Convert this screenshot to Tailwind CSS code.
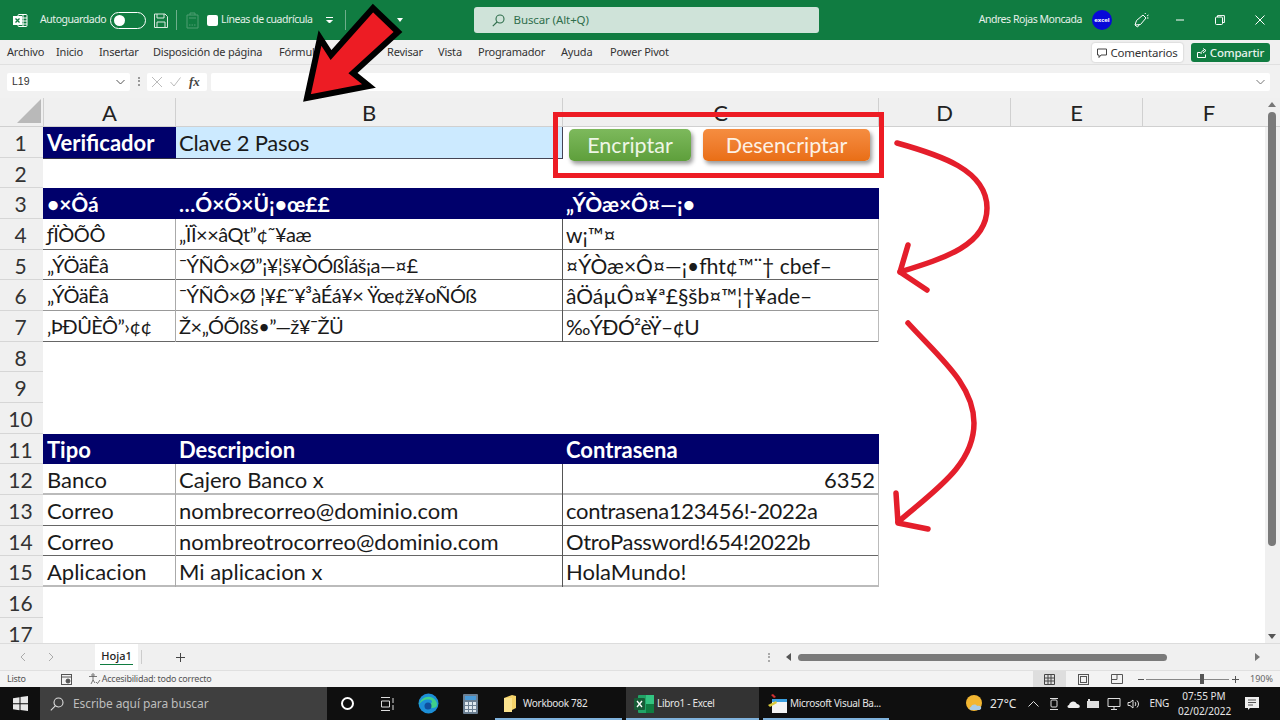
<!DOCTYPE html>
<html lang="es">
<head>
<meta charset="UTF-8">
<script src="https://cdn.jsdelivr.net/npm/@tailwindcss/browser@4"></script>
<title>Libro1 - Excel</title>
</head>
<body class="font-['Noto_Sans',sans-serif]">
<div class="relative w-[1280px] h-[720px] overflow-hidden flex flex-col bg-white">

  <!-- Title bar -->
  <div class="h-[40px] shrink-0 bg-[#107c41] flex items-center text-[10.500px] tracking-[-0.45px] text-[#e6f0ea]">
    <svg class="ml-[13px] w-[15px] h-[15px]" viewBox="0 0 15 15" fill="none" stroke="#fff"><rect x="5" y="1.500" width="9" height="12" rx="1"/><path d="M10 2v11M5 5h9M5 8h9M5 11h9"/><rect x="0.500" y="3.500" width="8" height="8" fill="#fff"/><path d="M2.500 5.500l4 4M6.500 5.500l-4 4" stroke="#107c41" stroke-width="1.300"/></svg>
    <span class="ml-[12px]">Autoguardado</span>
    <div class="ml-[4px] w-[36px] h-[17px] rounded-full border border-white flex items-center px-[3px]"><div class="w-[11px] h-[11px] rounded-full bg-white"></div></div>
    <svg class="ml-[8px] w-[14px] h-[15px]" viewBox="0 0 14 15" fill="none" stroke="#dbe9e1"><path d="M.5 1h10.500l2.500 2.500v11H.5z"/><path d="M3 1v4h7V1M3 14.500V9h8v5.500"/></svg>
    <div class="ml-[8px] w-px h-[20px] bg-[#6fae8c]"></div>
    <svg class="ml-[9px] w-[13px] h-[17px]" viewBox="0 0 13 17" fill="none" stroke="#4f9d73"><path d="M1 3h11v13H1z"/><path d="M4 3V1h5v2M3 6h7"/><path d="M3 13h7" stroke-dasharray="1.500 1"/></svg>
    <div class="ml-[8px] w-[11px] h-[11px] rounded-[2px] bg-white"></div>
    <span class="ml-[3px] text-[#e3efe8]">Líneas de cuadrícula</span>
    <svg class="ml-[12px] w-[9px] h-[8px]" viewBox="0 0 9 8" fill="none" stroke="#fff"><path d="M1 1.500h7"/><path d="M1.500 4l3 3 3-3" fill="#fff"/></svg>
    <div class="ml-[11px] w-px h-[20px] bg-[#6fae8c]"></div>
    <div class="ml-[51px] w-0 h-0 border-x-[3px] border-x-transparent border-t-[4px] border-t-white"></div>
    <div class="ml-[71px] w-[345px] h-[26px] rounded-[3px] bg-[#cfe3d9] flex items-center text-[#2f6e4c]">
      <svg class="ml-[18px] w-[13px] h-[13px]" viewBox="0 0 13 13" fill="none" stroke="#2f6e4c" stroke-width="1.100"><circle cx="8" cy="5" r="4"/><path d="M5 8L.8 12.200"/></svg>
      <span class="ml-[9px] text-[11.500px] tracking-[-0.1px]">Buscar (Alt+Q)</span>
    </div>
    <span class="ml-auto">Andres Rojas Moncada</span>
    <div class="ml-[10px] w-[20px] h-[20px] rounded-full bg-[#0808d8] flex items-center justify-center text-[6px] text-white font-bold leading-none tracking-normal">excel</div>
    <svg class="ml-[22px] w-[15px] h-[15px]" viewBox="0 0 15 15" fill="none" stroke="#fff"><path d="M1 12l1.500-4.500L9 2l3 3-5.500 6.500z"/><path d="M1 12l2.500 2 2-2.500M11 1l.5-1M13 3l1.500-1M13 5h1.500"/></svg>
    <svg class="ml-[26px] w-[10px] h-[10px]" viewBox="0 0 10 10" stroke="#fff"><path d="M1 5h8"/></svg>
    <svg class="ml-[30px] w-[10px] h-[10px]" viewBox="0 0 10 10" fill="none" stroke="#fff"><rect x=".5" y="2" width="7" height="7.500" rx="1"/><path d="M2.500 2V.6h6.900V7.500H8"/></svg>
    <svg class="ml-[30px] mr-[15px] w-[10px] h-[10px]" viewBox="0 0 10 10" stroke="#fff"><path d="M.5.500l9 9M9.500.500l-9 9"/></svg>
  </div>

  <!-- Ribbon tabs -->
  <div class="h-[25px] shrink-0 bg-[#f0f0f0] flex items-center pt-px text-[11px] tracking-[-0.2px] text-[#333] border-b border-[#e0e0e0]">
    <span class="ml-[7px] w-[49px]">Archivo</span>
    <span class="w-[43px]">Inicio</span>
    <span class="w-[54px]">Insertar</span>
    <span class="w-[126px]">Disposición de página</span>
    <span class="w-[56px]">Fórmulas</span>
    <span class="w-[52px]">Datos</span>
    <span class="w-[51px]">Revisar</span>
    <span class="w-[40px]">Vista</span>
    <span class="w-[83px]">Programador</span>
    <span class="w-[49px]">Ayuda</span>
    <span>Power Pivot</span>
    <div class="ml-auto w-[91px] h-[19px] rounded-[3px] bg-white shadow-[0_0_2px_rgba(0,0,0,.25)] flex items-center justify-center gap-[3px] text-[11.500px] text-[#333]">
      <svg class="w-[10px] h-[10px]" viewBox="0 0 10 10" fill="none" stroke="#444"><path d="M.5 1h9v6H4L2 9.500V7H.5z"/></svg>Comentarios
    </div>
    <div class="ml-[8px] mr-[10px] w-[79px] h-[19px] rounded-[3px] bg-[#107c41] flex items-center justify-center gap-[3px] text-[11.500px] font-medium text-[#e6f3ec]">
      <svg class="w-[10px] h-[10px]" viewBox="0 0 10 10" fill="none" stroke="#fff"><path d="M.5 4.500h3M.5 4.500v5h8v-3M4 6c0-2.500 1.500-3.500 3-3.500M6 .5l3 2-3 2.500"/></svg>Compartir
    </div>
  </div>

  <!-- Formula bar -->
  <div class="h-[33px] shrink-0 bg-[#f1f1f1] flex items-center text-[11px] text-[#333]">
    <div class="ml-[7px] w-[123px] h-[18px] bg-white rounded-[2px] flex items-center justify-between px-[5px]">
      <span class="font-['Liberation_Sans',sans-serif] text-[10.500px]">L19</span>
      <svg class="w-[9px] h-[6px]" viewBox="0 0 9 6" fill="none" stroke="#555"><path d="M.5 1l4 4 4-4"/></svg>
    </div>
    <div class="ml-[8px] w-[2px] h-[9px] border-l-2 border-dotted border-[#999]"></div>
    <div class="ml-[7px] w-[60px] h-[18px] bg-white rounded-[2px] flex items-center">
      <svg class="ml-[5px] w-[10px] h-[10px]" viewBox="0 0 10 10" stroke="#bbb"><path d="M0 0l10 10M10 0L0 10"/></svg>
      <svg class="ml-[8px] w-[11px] h-[10px]" viewBox="0 0 11 10" fill="none" stroke="#bbb"><path d="M.5 5l3.500 4L10.500.5"/></svg>
      <span class="ml-[8px] font-['Liberation_Serif',serif] italic font-bold text-[13px] text-[#444]">fx</span>
    </div>
    <div class="ml-[4px] flex-1 mr-[10px] h-[18px] bg-white rounded-[2px] flex items-center justify-end pr-[5px]">
      <svg class="w-[9px] h-[6px]" viewBox="0 0 9 6" fill="none" stroke="#777"><path d="M.5 1l4 4 4-4"/></svg>
    </div>
  </div>

  <!-- Column headers -->
  <div class="h-[29px] shrink-0 bg-[#f0f0f0] flex font-['Lato',sans-serif] text-[22px] text-[#222] border-b border-[#d0d0d0] overflow-hidden">
    <div class="w-[43px] shrink-0 flex items-end justify-end pr-[2px] pb-[3px]">
      <div class="w-0 h-0 border-l-[24px] border-l-transparent border-b-[24px] border-b-[#b9b9b9]"></div>
    </div>
    <div class="w-[133px] shrink-0 flex items-center justify-center border-x border-[#d0d0d0]">A</div>
    <div class="w-[387px] shrink-0 flex items-center justify-center border-r border-[#d0d0d0]">B</div>
    <div class="w-[316px] shrink-0 flex items-center justify-center border-r border-[#d0d0d0]">C</div>
    <div class="w-[132px] shrink-0 flex items-center justify-center border-r border-[#d0d0d0]">D</div>
    <div class="w-[132px] shrink-0 flex items-center justify-center border-r border-[#d0d0d0]">E</div>
    <div class="w-[132px] shrink-0 flex items-center justify-center">F</div>
  </div>

  <!-- Sheet -->
  <div class="h-[516px] shrink-0 flex overflow-hidden font-['Lato',sans-serif] text-[22px] text-[#1a1a1a]">
    <div class="w-[43px] shrink-0 bg-[#f0f0f0] text-[#333] text-[21px] flex flex-col text-center">
      <div class="h-[30.670px] shrink-0 border-b border-[#d6d6d6] pr-[2px] leading-[31px]">1</div>
      <div class="h-[30.670px] shrink-0 border-b border-[#d6d6d6] pr-[2px] leading-[31px]">2</div>
      <div class="h-[30.670px] shrink-0 border-b border-[#d6d6d6] pr-[2px] leading-[31px]">3</div>
      <div class="h-[30.670px] shrink-0 border-b border-[#d6d6d6] pr-[2px] leading-[31px]">4</div>
      <div class="h-[30.670px] shrink-0 border-b border-[#d6d6d6] pr-[2px] leading-[31px]">5</div>
      <div class="h-[30.670px] shrink-0 border-b border-[#d6d6d6] pr-[2px] leading-[31px]">6</div>
      <div class="h-[30.670px] shrink-0 border-b border-[#d6d6d6] pr-[2px] leading-[31px]">7</div>
      <div class="h-[30.670px] shrink-0 border-b border-[#d6d6d6] pr-[2px] leading-[31px]">8</div>
      <div class="h-[30.670px] shrink-0 border-b border-[#d6d6d6] pr-[2px] leading-[31px]">9</div>
      <div class="h-[30.670px] shrink-0 border-b border-[#d6d6d6] pr-[2px] leading-[31px]">10</div>
      <div class="h-[30.670px] shrink-0 border-b border-[#d6d6d6] pr-[2px] leading-[31px]">11</div>
      <div class="h-[30.670px] shrink-0 border-b border-[#d6d6d6] pr-[2px] leading-[31px]">12</div>
      <div class="h-[30.670px] shrink-0 border-b border-[#d6d6d6] pr-[2px] leading-[31px]">13</div>
      <div class="h-[30.670px] shrink-0 border-b border-[#d6d6d6] pr-[2px] leading-[31px]">14</div>
      <div class="h-[30.670px] shrink-0 border-b border-[#d6d6d6] pr-[2px] leading-[31px]">15</div>
      <div class="h-[30.670px] shrink-0 border-b border-[#d6d6d6] pr-[2px] leading-[31px]">16</div>
      <div class="h-[30.670px] shrink-0 pr-[2px] leading-[31px]">17</div>
    </div>

    <div class="flex-1 flex flex-col bg-white">
      <!-- row 1 -->
      <div class="h-[30.670px] shrink-0 grid grid-cols-[133px_387px] w-[520px] leading-[31px]">
        <div class="bg-[#00006b] text-white font-bold pl-[4px] border-b border-[#334]">Verificador</div>
        <div class="bg-[#cceaff] pl-[3px] tracking-[-0.2px] border-r border-b border-[#445]">Clave 2 Pasos</div>
      </div>
      <div class="h-[30.670px] shrink-0"></div>
      <!-- encrypted table -->
      <div class="h-[30.670px] shrink-0 grid grid-cols-[133px_387px_316px] w-[836px] leading-[31px] bg-[#00006b] text-white text-[21px] font-bold">
        <div class="pl-[4px]">•×Ôá</div><div class="pl-[3px]">…Ó×Õ×Ü¡•œ££</div><div class="pl-[3px]">„ÝÒæ×Ô¤—¡•</div>
      </div>
      <div class="h-[30.670px] shrink-0 grid grid-cols-[133px_387px_316px] w-[836px] leading-[31px] text-[20px] border-b border-[#666]">
        <div class="pl-[4px] tracking-[-0.5px] border-r border-[#aaa]">ƒÏÒÕÔ</div><div class="pl-[3px] tracking-[-0.5px] border-r border-[#555]">„ÏÎ××âQt”¢˜¥aæ</div><div class="pl-[3px] text-[21px] border-r border-[#bbb]">w¡™¤</div>
      </div>
      <div class="h-[30.670px] shrink-0 grid grid-cols-[133px_387px_316px] w-[836px] leading-[31px] text-[20px] border-b border-[#666]">
        <div class="pl-[4px] tracking-[-0.5px] border-r border-[#aaa]">„ÝÖäÊâ</div><div class="pl-[3px] tracking-[-0.5px] border-r border-[#555]">¯ÝÑÔ×Ø”¡¥¦š¥ÒÓßÎáš¡a—¤£</div><div class="pl-[3px] text-[21px] border-r border-[#bbb]">¤ÝÒæ×Ô¤—¡•fht¢™¨† cbef–</div>
      </div>
      <div class="h-[30.670px] shrink-0 grid grid-cols-[133px_387px_316px] w-[836px] leading-[31px] text-[20px] border-b border-[#999]">
        <div class="pl-[4px] tracking-[-0.5px] border-r border-[#aaa]">„ÝÖäÊâ</div><div class="pl-[3px] tracking-[-0.5px] border-r border-[#555]">¯ÝÑÔ×Ø ¦¥£˜¥³àÉá¥× Ÿœ¢ž¥oÑÓß</div><div class="pl-[3px] text-[21px] border-r border-[#bbb]">âÖáµÔ¤¥ª£§šb¤™¦†¥ade–</div>
      </div>
      <div class="h-[30.670px] shrink-0 grid grid-cols-[133px_387px_316px] w-[836px] leading-[31px] text-[20px] border-b border-[#666]">
        <div class="pl-[4px] tracking-[-0.5px] border-r border-[#aaa]">‚ÞÐÛÈÔ”›¢¢</div><div class="pl-[3px] tracking-[-0.5px] border-r border-[#555]">Ž×„ÓÕßš•”—ž¥¯ŽÜ</div><div class="pl-[3px] text-[21px] tracking-[-0.6px] border-r border-[#bbb]">‰ÝÐÓ²èŸ–¢U</div>
      </div>
      <div class="h-[30.670px] shrink-0"></div>
      <div class="h-[30.670px] shrink-0"></div>
      <div class="h-[30.670px] shrink-0"></div>
      <!-- password table -->
      <div class="h-[30.670px] shrink-0 grid grid-cols-[133px_387px_316px] w-[836px] leading-[31px] bg-[#00006b] text-white font-bold">
        <div class="pl-[4px]">Tipo</div><div class="pl-[3px]">Descripcion</div><div class="pl-[3px]">Contrasena</div>
      </div>
      <div class="h-[30.670px] shrink-0 grid grid-cols-[133px_387px_316px] w-[836px] leading-[31px] border-b-2 border-[#bbb]">
        <div class="pl-[4px] border-r border-[#aaa]">Banco</div><div class="pl-[3px] border-r border-[#555]">Cajero Banco x</div><div class="pr-[3px] text-right border-r border-[#bbb]">6352</div>
      </div>
      <div class="h-[30.670px] shrink-0 grid grid-cols-[133px_387px_316px] w-[836px] leading-[31px] border-b border-[#666]">
        <div class="pl-[4px] border-r border-[#aaa]">Correo</div><div class="pl-[3px] border-r border-[#555]">nombrecorreo@dominio.com</div><div class="pl-[3px] tracking-[-0.3px] border-r border-[#bbb]">contrasena123456!-2022a</div>
      </div>
      <div class="h-[30.670px] shrink-0 grid grid-cols-[133px_387px_316px] w-[836px] leading-[31px] border-b border-[#666]">
        <div class="pl-[4px] border-r border-[#aaa]">Correo</div><div class="pl-[3px] border-r border-[#555]">nombreotrocorreo@dominio.com</div><div class="pl-[3px] tracking-[-0.3px] border-r border-[#bbb]">OtroPassword!654!2022b</div>
      </div>
      <div class="h-[30.670px] shrink-0 grid grid-cols-[133px_387px_316px] w-[836px] leading-[31px] border-b-2 border-[#bbb]">
        <div class="pl-[4px] border-r border-[#aaa]">Aplicacion</div><div class="pl-[3px] border-r border-[#555]">Mi aplicacion x</div><div class="pl-[3px] border-r border-[#bbb]">HolaMundo!</div>
      </div>
    </div>

    <!-- Vertical scrollbar -->
    <div class="w-[15px] shrink-0 bg-[#f0f0f0] flex flex-col items-center"></div>
  </div>

  <!-- Sheet tabs -->
  <div class="h-[27px] shrink-0 bg-[#f0f0f0] border-t border-[#dcdcdc] flex items-center text-[11px] text-[#222]">
    <svg class="ml-[20px] w-[6px] h-[10px]" viewBox="0 0 6 10" fill="none" stroke="#aaa"><path d="M5 1L1 5l4 4"/></svg>
    <svg class="ml-[22px] w-[6px] h-[10px]" viewBox="0 0 6 10" fill="none" stroke="#aaa"><path d="M1 1l4 4-4 4"/></svg>
    <div class="ml-[41px] w-[43px] h-[26px] bg-white flex flex-col items-center justify-center font-medium leading-[14px]"><span class="border-b-[1.500px] border-[#107c41] px-[1px] pb-[1px]">Hoja1</span></div>
    <div class="ml-[3px] w-px h-[14px] bg-[#ccc]"></div>
    <svg class="ml-[33px] w-[11px] h-[11px]" viewBox="0 0 11 11" stroke="#444"><path d="M5.500 1v9M1 5.500h9"/></svg>
    <div class="ml-[582px] w-[2px] h-[9px] border-l-2 border-dotted border-[#aaa]"></div>
    <div class="ml-[16px] w-0 h-0 border-y-[4px] border-y-transparent border-r-[5px] border-r-[#555]"></div>
    <div class="ml-[7px] w-[369px] h-[7px] rounded-full bg-[#7a7a7a]"></div>
    <div class="ml-[88px] w-0 h-0 border-y-[4px] border-y-transparent border-l-[5px] border-l-[#777]"></div>
  </div>

  <!-- Status bar -->
  <div class="h-[17px] shrink-0 bg-[#f3f3f3] border-t border-[#e0e0e0] flex items-center text-[9px] tracking-[-0.25px] text-[#555]">
    <span class="ml-[7px]">Listo</span>
    <svg class="ml-[35px] w-[11px] h-[11px]" viewBox="0 0 11 11" fill="none" stroke="#555"><rect x=".5" y=".5" width="10" height="10"/><path d="M.5 3h10"/><circle cx="7" cy="7" r="2" fill="#555"/></svg>
    <svg class="ml-[16px] w-[13px] h-[12px]" viewBox="0 0 13 12" fill="none" stroke="#555" stroke-width=".8"><circle cx="5" cy="2" r="1.200"/><path d="M1 3.500h8M5 4v3L3 11M5 7l2 3M8 9l1.500 1.500L12 7"/></svg>
    <span class="ml-[1px]">Accesibilidad: todo correcto</span>
    <div class="ml-auto w-[33px] h-[17px] bg-[#dedede] flex items-center justify-center">
      <svg class="w-[11px] h-[11px]" viewBox="0 0 11 11" fill="none" stroke="#444"><path d="M.5.500h10v10H.5zM4 .5v10M7 .5v10M.5 4h10M.5 7h10"/></svg>
    </div>
    <svg class="ml-[12px] w-[11px] h-[11px]" viewBox="0 0 11 11" fill="none" stroke="#555"><rect x=".5" y=".5" width="10" height="10"/><rect x="2.500" y="2.500" width="6" height="6"/></svg>
    <svg class="ml-[22px] w-[12px] h-[10px]" viewBox="0 0 12 10" fill="none" stroke="#555"><path d="M.5.500h11v9H.5zM6 .5v5H.5"/></svg>
    <div class="ml-[15px] w-[6px] h-px bg-[#555]"></div>
    <div class="ml-[2px] w-[83px] h-px bg-[#888] relative"><div class="absolute left-[54px] top-[-5px] w-[4px] h-[10px] bg-[#555]"></div></div>
    <svg class="ml-[3px] w-[7px] h-[7px]" viewBox="0 0 7 7" stroke="#555"><path d="M3.500 0v7M0 3.500h7"/></svg>
    <span class="ml-[11px] mr-[7px] tracking-normal text-[#666]">190%</span>
  </div>

  <!-- Taskbar -->
  <div class="h-[33px] shrink-0 bg-[#0f0f0f] flex items-center text-[10px] tracking-[-0.3px] text-[#e6e6e6]">
    <div class="w-[40px] flex justify-center">
      <svg class="w-[15px] h-[15px]" viewBox="0 0 15 15" fill="#e8e8e8"><path d="M0 2.200l6.500-1v6H0zM7.500 1l7.500-1v7.200H7.500zM0 8.200h6.500v6L0 13.300zM7.500 8.200H15V15l-7.500-1z"/></svg>
    </div>
    <div class="w-[287px] h-full bg-[#3f3f3f] flex items-center">
      <svg class="ml-[10px] w-[14px] h-[14px]" viewBox="0 0 14 14" fill="none" stroke="#ddd" stroke-width="1.100"><circle cx="8.500" cy="5.500" r="4.500"/><path d="M5.300 8.800L.8 13.300"/></svg>
      <span class="ml-[9px] text-[12px] tracking-[-0.1px] text-[#bdbdbd]">Escribe aquí para buscar</span>
    </div>
    <div class="w-[40px] flex justify-center"><div class="w-[13px] h-[13px] rounded-full border-2 border-white"></div></div>
    <div class="w-[40px] flex justify-center">
      <svg class="w-[14px] h-[14px]" viewBox="0 0 14 14" fill="none" stroke="#ddd"><path d="M1 .5h9M1 13.500h9M1.500 4h8v6h-8zM13 1v5M13 8v5"/></svg>
    </div>
    <div class="w-[42px] flex justify-center">
      <svg class="w-[21px] h-[21px]" viewBox="0 0 21 21"><circle cx="10.500" cy="10.500" r="10" fill="#1c8fd8"/><path d="M1 12C2 5 10 2 15 5c4 2.500 5 7 3 9-3 2-7 1-7-1 0-2 3-2 3-5-3-3-11-1-13 4z" fill="#3fd08a"/><circle cx="10" cy="13" r="3.500" fill="#0f4f9e"/></svg>
    </div>
    <div class="ml-[2px] w-[44px] pr-[6px] flex justify-center">
      <svg class="w-[15px] h-[20px]" viewBox="0 0 15 20"><rect width="15" height="20" rx="1" fill="#6b7f92"/><rect x="2" y="2" width="11" height="4" fill="#4a9bd8"/><path d="M2 8h3v3H2zM6 8h3v3H6zM10 8h3v3h-3zM2 12h3v3H2zM6 12h3v3H6zM10 12h3v3h-3zM2 16h3v2H2zM6 16h3v2H6zM10 16h3v2h-3z" fill="#dfe8ef"/></svg>
    </div>
    <div class="relative w-[127px] h-full flex items-center">
      <svg class="ml-[9px] w-[12px] h-[17px]" viewBox="0 0 12 17"><path d="M0 3l8-3 4 1v12l-8 4H0z" fill="#f5d36a"/><path d="M0 3h8v14H0z" fill="#fbe38e"/></svg>
      <span class="ml-[7px]">Workbook 782</span>
      <div class="absolute left-0 right-0 bottom-0 h-[2px] bg-[#7fb2dc]"></div>
    </div>
    <div class="relative ml-[4px] w-[133px] h-full bg-[#333] flex items-center">
      <svg class="ml-[8px] w-[20px] h-[20px]" viewBox="0 0 20 20"><rect x="4" y="1" width="16" height="18" rx="1" fill="#21a366"/><rect x="12" y="1" width="8" height="9" fill="#33c481"/><rect x="12" y="10" width="8" height="9" fill="#107c41"/><rect y="4" width="11" height="12" rx="1" fill="#185c37"/><path d="M3 7l5 6M8 7l-5 6" stroke="#fff" stroke-width="1.300"/></svg>
      <span class="ml-[3px]">Libro1 - Excel</span>
      <div class="absolute left-0 right-0 bottom-0 h-[2px] bg-[#7fb2dc]"></div>
    </div>
    <div class="relative ml-[4px] w-[126px] h-full flex items-center overflow-hidden">
      <svg class="ml-[5px] w-[19px] h-[19px]" viewBox="0 0 19 19"><rect x="4" y="5" width="15" height="14" fill="#f4f4f4"/><rect x="4" y="5" width="15" height="3" fill="#3ba0e0"/><path d="M0 11l8-4 1 2-7 4z" fill="#d9c93a"/><path d="M5 0l3 3-2 1-3-3z" fill="#d03030"/></svg>
      <span class="ml-[3px] whitespace-nowrap">Microsoft Visual Ba...</span>
      <div class="absolute left-0 right-0 bottom-0 h-[2px] bg-[#7fb2dc]"></div>
    </div>
    <svg class="ml-[77px] w-[17px] h-[17px]" viewBox="0 0 17 17"><circle cx="8" cy="8" r="8" fill="#f2b632"/><path d="M5 15c-2 0-2-3 0-3 1-3 5-3 6-1 3-1 5 1 4 3-1 1-2 1-3 1z" fill="#a9cce8"/></svg>
    <span class="ml-[7px] text-[12px] tracking-normal">27°C</span>
    <svg class="ml-[12px] w-[11px] h-[7px]" viewBox="0 0 11 7" fill="none" stroke="#ddd"><path d="M.5 6.500l5-5 5 5"/></svg>
    <svg class="ml-[10px] w-[10px] h-[14px]" viewBox="0 0 10 14" fill="none" stroke="#ddd"><rect x="2" y="3" width="6" height="7" rx="1"/><path d="M1 1.500h8M1 12.500h8"/></svg>
    <svg class="ml-[8px] w-[14px] h-[8px]" viewBox="0 0 14 8" fill="#eee"><path d="M2 8C0 8 0 5 2 5c1-4 6-5 8-1 3 0 4 4 1 4z"/></svg>
    <svg class="ml-[6px] w-[13px] h-[10px]" viewBox="0 0 13 10" fill="#ddd"><rect y="2" width="12" height="7"/><rect x="1" width="2" height="2"/></svg>
    <svg class="ml-[7px] w-[14px] h-[13px]" viewBox="0 0 14 13" fill="none" stroke="#ddd"><path d="M1 1.500h12v8H1zM7 9.500V12M4 12.500h6"/></svg>
    <svg class="ml-[6px] w-[13px] h-[12px]" viewBox="0 0 13 12" fill="none" stroke="#ddd"><path d="M1 4.500h2L6 2v8L3 7.500H1zM8 4c1 1 1 3 0 4M10 2.500c2 2 2 5 0 7"/></svg>
    <span class="ml-[9px]">ENG</span>
    <div class="ml-[9px] w-[52px] text-center leading-[15px] tracking-normal">07:55 PM<br>02/02/2022</div>
    <svg class="ml-[15px] w-[14px] h-[14px]" viewBox="0 0 14 14"><path d="M0 0h14v11H5L3 13v-2H0z" fill="#eee"/><path d="M3 3h8M3 5.500h8M3 8h5" stroke="#555"/></svg>
  </div>

  <!-- Excel form buttons over the sheet -->
  <div class="absolute left-[569px] top-[129px] w-[122px] h-[32px] rounded-[5px] bg-linear-to-b from-[#7db95c] to-[#5e9f3b] shadow-[2px_3px_4px_rgba(0,0,0,.4)] flex items-center justify-center font-['Lato',sans-serif] text-[21.500px] text-[#eef6e6]">Encriptar</div>
  <div class="absolute left-[703px] top-[129px] w-[167px] h-[32px] rounded-[5px] bg-linear-to-b from-[#f58d40] to-[#e96e14] shadow-[2px_3px_4px_rgba(0,0,0,.4)] flex items-center justify-center font-['Lato',sans-serif] text-[21.500px] text-[#fdf1e4]">Desencriptar</div>

  <!-- Drawn annotations -->
  <svg class="absolute inset-0 w-[1280px] h-[720px] pointer-events-none" viewBox="0 0 1280 720" fill="none">
    <rect x="555.500" y="114.500" width="326" height="61" stroke="#ed1c24" stroke-width="5"/>
    <path d="M307 98L320 38L331 55L373 8L398 32L353 73L369 86Z" fill="#ed1c24" stroke="#000" stroke-width="6" stroke-linejoin="miter"/>
    <g stroke="#e41e2b" stroke-width="5.500" stroke-linecap="round" stroke-linejoin="round">
      <path d="M897 143C940 155 987 170 987 208C987 245 945 258 900 272"/>
      <path d="M908 245L900 272L927 290"/>
      <path d="M908 323C940 358 974 385 974 423C974 465 935 490 898 522"/>
      <path d="M896 493L898 523L928 529"/>
    </g>
  </svg>

  <!-- Scrollbar thumb and arrows over the track -->
  <div class="absolute left-[1268px] top-[112px] w-[8px] h-[434px] rounded-full bg-[#7a7a7a]"></div>
  <div class="absolute left-[1268px] top-[102px] w-0 h-0 border-x-[4px] border-x-transparent border-b-[5px] border-b-[#777]"></div>
  <div class="absolute left-[1268px] top-[634px] w-0 h-0 border-x-[4px] border-x-transparent border-t-[5px] border-t-[#555]"></div>
</div>
</body>
</html>
